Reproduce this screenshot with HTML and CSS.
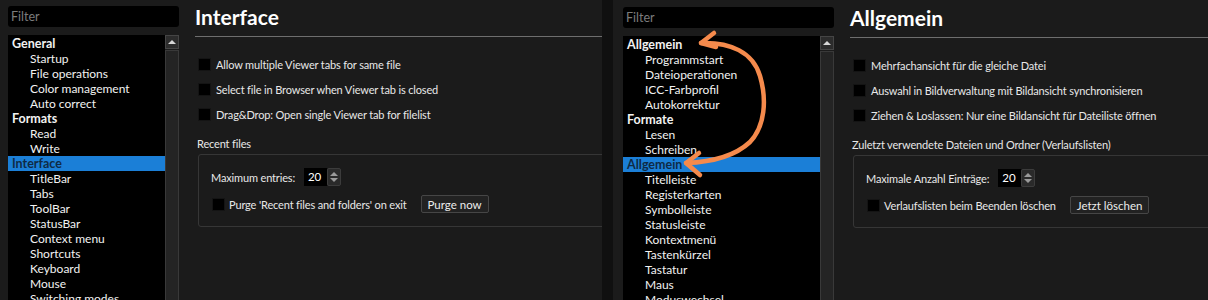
FILE: index.html
```html
<!DOCTYPE html>
<html lang="de">
<head>
  <meta charset="UTF-8">
  <meta name="viewport" content="width=device-width, initial-scale=1.0">
  <title>Einstellungen: Interface / Allgemein</title>
  <link rel="stylesheet" href="styles.css">
</head>
<body>
  <div class="shots">
    <section class="panel panel-en">
      <aside class="nav">
        <div class="filter">Filter</div>
        <div class="tree">
          <ul class="items">
            <li class="parent">General</li>
            <li>Startup</li>
            <li>File operations</li>
            <li>Color management</li>
            <li>Auto correct</li>
            <li class="parent">Formats</li>
            <li>Read</li>
            <li>Write</li>
            <li class="parent sel">Interface</li>
            <li>TitleBar</li>
            <li>Tabs</li>
            <li>ToolBar</li>
            <li>StatusBar</li>
            <li>Context menu</li>
            <li>Shortcuts</li>
            <li>Keyboard</li>
            <li>Mouse</li>
            <li>Switching modes</li>
          </ul>
          <div class="scroll">
            <div class="scroll-up"></div>
            <div class="scroll-track"></div>
          </div>
        </div>
      </aside>
      <main class="page">
        <h1>Interface</h1>
        <div class="checks">
          <div class="check"><span class="box"></span>Allow multiple Viewer tabs for same file</div>
          <div class="check"><span class="box"></span>Select file in Browser when Viewer tab is closed</div>
          <div class="check"><span class="box"></span>Drag&amp;Drop: Open single Viewer tab for filelist</div>
        </div>
        <div class="group-title">Recent files</div>
        <div class="group">
          <div class="row">
            <span>Maximum entries:</span>
            <span class="spin"><span class="spin-value">20</span><span class="spin-btns"><i class="up"></i><i class="down"></i></span></span>
          </div>
          <div class="row">
            <span class="box"></span>
            <span>Purge 'Recent files and folders' on exit</span>
            <button class="btn">Purge now</button>
          </div>
        </div>
      </main>
    </section>

    <section class="panel panel-de">
      <aside class="nav">
        <div class="filter">Filter</div>
        <div class="tree">
          <ul class="items">
            <li class="parent">Allgemein</li>
            <li>Programmstart</li>
            <li>Dateioperationen</li>
            <li>ICC-Farbprofil</li>
            <li>Autokorrektur</li>
            <li class="parent">Formate</li>
            <li>Lesen</li>
            <li>Schreiben</li>
            <li class="parent sel">Allgemein</li>
            <li>Titelleiste</li>
            <li>Registerkarten</li>
            <li>Symbolleiste</li>
            <li>Statusleiste</li>
            <li>Kontextmenü</li>
            <li>Tastenkürzel</li>
            <li>Tastatur</li>
            <li>Maus</li>
            <li>Moduswechsel</li>
          </ul>
          <div class="scroll">
            <div class="scroll-up"></div>
            <div class="scroll-track"></div>
          </div>
        </div>
      </aside>
      <main class="page">
        <h1>Allgemein</h1>
        <div class="checks">
          <div class="check"><span class="box"></span>Mehrfachansicht für die gleiche Datei</div>
          <div class="check"><span class="box"></span>Auswahl in Bildverwaltung mit Bildansicht synchronisieren</div>
          <div class="check"><span class="box"></span>Ziehen &amp; Loslassen: Nur eine Bildansicht für Dateiliste öffnen</div>
        </div>
        <div class="group-title">Zuletzt verwendete Dateien und Ordner (Verlaufslisten)</div>
        <div class="group">
          <div class="row">
            <span>Maximale Anzahl Einträge:</span>
            <span class="spin"><span class="spin-value">20</span><span class="spin-btns"><i class="up"></i><i class="down"></i></span></span>
          </div>
          <div class="row">
            <span class="box"></span>
            <span>Verlaufslisten beim Beenden löschen</span>
            <button class="btn">Jetzt löschen</button>
          </div>
        </div>
      </main>
    </section>

    <!-- hand drawn marker linking the two "Allgemein" entries -->
    <svg class="marker" width="1208" height="300" viewBox="0 0 1208 300">
      <g fill="none" stroke="#f58a4c" stroke-width="4.5" stroke-linecap="round" stroke-linejoin="round">
        <path d="M714,33 L701,43 L716,47"/>
        <path d="M701,43 C730,42 753,52 760,76 C767,100 765,126 750,142 C735,156 712,162 686,163"/>
        <path d="M699,153 L686,163 L700,175"/>
      </g>
    </svg>
  </div>
</body>
</html>
```

FILE: styles.css
```css
* {
  box-sizing: border-box;
}

body {
  margin: 0;
  background-color: #101010;
  font-family: Lato, "Liberation Sans", sans-serif;
  color: #e8e8e8;
}

.shots {
  position: relative;
  display: flex;
  gap: 11px;
  height: 300px;
  overflow: hidden;
}

.panel {
  display: flex;
  height: 300px;
  background-color: #1b1b1b;
  overflow: hidden;
}

.panel-en {
  width: 602px;
  padding: 6px 0 0 8px;
}

.panel-de {
  flex: 1;
  padding: 7px 0 0 10px;
}

/* left column: filter + tree */
.nav {
  width: 171px;
  flex-shrink: 0;
  display: flex;
  flex-direction: column;
  gap: 8px;
}

.panel-de .nav {
  width: 211px;
}

.filter {
  height: 21px;
  padding: 0 3px;
  background-color: #000;
  border-radius: 3px;
  color: #7c7c7c;
  font-size: 12.5px;
  line-height: 21px;
}

.tree {
  flex: 1;
  display: flex;
  background-color: #000;
}

.items {
  flex: 1;
  margin: 0;
  padding: 1px 0 0;
  list-style: none;
  font-size: 12px;
  color: #f2f2f2;
}

.items li {
  height: 15px;
  padding-left: 22px;
  line-height: 15px;
  white-space: nowrap;
}

.items li.parent {
  padding-left: 4px;
  font-size: 12.5px;
  font-weight: bold;
}

.items li.sel {
  background-color: #1b7fd7;
  color: #0f2b46;
}

.scroll {
  width: 14px;
  display: flex;
  flex-direction: column;
  gap: 1px;
  background-color: #1b1b1b;
}

.scroll-up {
  height: 14px;
  display: flex;
  align-items: center;
  justify-content: center;
  background-color: #2c2c2c;
  border: 1px solid #454545;
}

.scroll-up::before {
  content: "";
  border-left: 4px solid transparent;
  border-right: 4px solid transparent;
  border-bottom: 4px solid #d8d8d8;
}

.scroll-track {
  flex: 1;
  background-color: #242424;
  border: 1px solid #393939;
}

/* settings page */
.page {
  flex: 1;
  margin-left: 16px;
  font-size: 11px;
  letter-spacing: -0.15px;
}

h1 {
  margin: 0;
  padding: 0 0 8px;
  border-bottom: 1px solid #6e6e6e;
  font-size: 21px;
  line-height: 22px;
  letter-spacing: 0;
  color: #fff;
}

.checks {
  padding-top: 15px;
}

.check {
  height: 25px;
  display: flex;
  align-items: center;
  gap: 5px;
  padding-left: 3px;
}

.box {
  width: 13px;
  height: 13px;
  flex-shrink: 0;
  background-color: #000;
  border: 1px solid #141414;
}

.group-title {
  height: 16px;
  margin-top: 9px;
  padding-left: 2px;
  line-height: 16px;
}

.group {
  margin: 2px -10px 0 3px;
  padding: 13px 12px;
  border: 1px solid #363636;
  border-radius: 3px;
  display: flex;
  flex-direction: column;
  gap: 9px;
}

.row {
  height: 18px;
  display: flex;
  align-items: center;
}

.row .box {
  margin: 0 4px 0 1px;
}

.spin {
  display: flex;
  height: 18px;
  margin-left: 9px;
}

.spin-value {
  width: 23px;
  padding-left: 4px;
  background-color: #000;
  line-height: 18px;
  font-size: 11.5px;
  color: #fff;
}

.spin-btns {
  width: 14px;
  display: flex;
  flex-direction: column;
  align-items: center;
  justify-content: center;
  gap: 2px;
  background-color: #2a2a2a;
  border: 1px solid #3c3c3c;
  border-radius: 2px;
}

.spin-btns i {
  border-left: 4px solid transparent;
  border-right: 4px solid transparent;
}

.spin-btns .up {
  border-bottom: 4px solid #9a9a9a;
}

.spin-btns .down {
  border-top: 4px solid #9a9a9a;
}

.btn {
  height: 18px;
  margin-left: 14px;
  padding: 0 6px;
  background-color: #222;
  border: 1px solid #464646;
  border-radius: 2px;
  font-family: inherit;
  font-size: 11.5px;
  color: #ececec;
}

.marker {
  position: absolute;
  top: 0;
  left: 0;
  pointer-events: none;
}
```
